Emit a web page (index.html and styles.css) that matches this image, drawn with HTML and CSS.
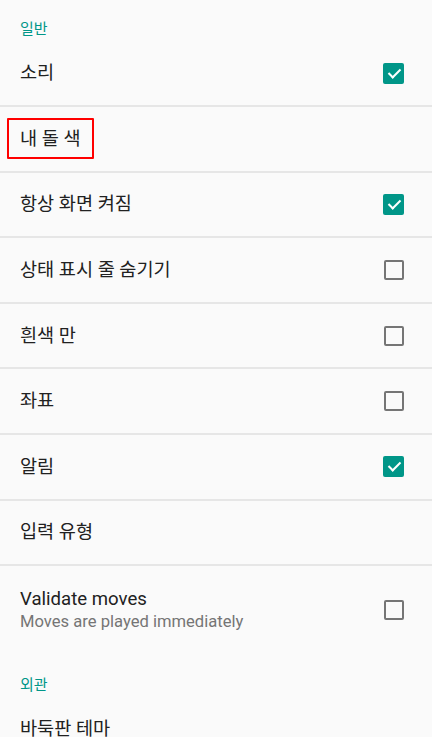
FILE: index.html
```html
<!DOCTYPE html>
<html>
<head>
  <link rel="stylesheet" href="styles.css">
</head>
<body>
  <div class="settings">
    <div class="category">일반</div>

    <div class="pref">
      <span class="pref-title">소리</span>
      <span class="box checked"></span>
    </div>
    <div class="pref">
      <span class="pref-title marked">내 돌 색</span>
    </div>
    <div class="pref">
      <span class="pref-title">항상 화면 켜짐</span>
      <span class="box checked"></span>
    </div>
    <div class="pref">
      <span class="pref-title">상태 표시 줄 숨기기</span>
      <span class="box"></span>
    </div>
    <div class="pref">
      <span class="pref-title">흰색 만</span>
      <span class="box"></span>
    </div>
    <div class="pref">
      <span class="pref-title">좌표</span>
      <span class="box"></span>
    </div>
    <div class="pref">
      <span class="pref-title">알림</span>
      <span class="box checked"></span>
    </div>
    <div class="pref">
      <span class="pref-title">입력 유형</span>
    </div>
    <div class="pref pref-tall last">
      <div class="pref-text">
        <div class="pref-title">Validate moves</div>
        <div class="pref-summary">Moves are played immediately</div>
      </div>
      <span class="box"></span>
    </div>

    <div class="category">외관</div>
    <div class="pref">
      <span class="pref-title">바둑판 테마</span>
    </div>
  </div>
</body>
</html>
```

FILE: styles.css
```css
body {
  margin: 0;
  background: #fafafa;
  font-family: Roboto, "Noto Sans CJK KR", sans-serif;
  color: #212121;
  overflow: hidden;
}

.settings {
  display: flex;
  flex-direction: column;
}

/* Category headers */
.category {
  padding: 17px 20px 0;
  height: 24.5px;
  line-height: 24px;
  font-size: 15px;
  color: #009688;
}

/* Preference rows */
.pref {
  display: flex;
  align-items: center;
  justify-content: space-between;
  min-height: 63.6px;
  padding: 0 28px 0 20px;
  border-bottom: 2px solid #e6e6e6;
}

.pref.last {
  border-bottom: none;
}

.pref-tall {
  padding-top: 20.5px;
  padding-bottom: 23px;
  min-height: 0;
}

.pref-title {
  font-size: 18.6px;
  line-height: 24px;
  color: #212121;
}

.pref-summary {
  font-size: 16.6px;
  line-height: 22px;
  color: #757575;
}

/* Highlight annotation */
.marked {
  position: relative;
}

.marked::after {
  content: "";
  position: absolute;
  left: -13px;
  right: -13px;
  top: -8.5px;
  bottom: -8.5px;
  border: 2px solid #f00;
  border-radius: 1px;
}

/* Checkboxes */
.box {
  width: 16px;
  height: 16px;
  border: 2.5px solid #757575;
  border-radius: 2px;
  flex-shrink: 0;
  position: relative;
}

.box.checked {
  width: 21px;
  height: 21px;
  border: none;
  background: #009688;
}

.box.checked::after {
  content: "";
  position: absolute;
  left: 7.5px;
  top: 3px;
  width: 5px;
  height: 10px;
  border: solid #fff;
  border-width: 0 2.5px 2.5px 0;
  transform: rotate(45deg);
}
```
